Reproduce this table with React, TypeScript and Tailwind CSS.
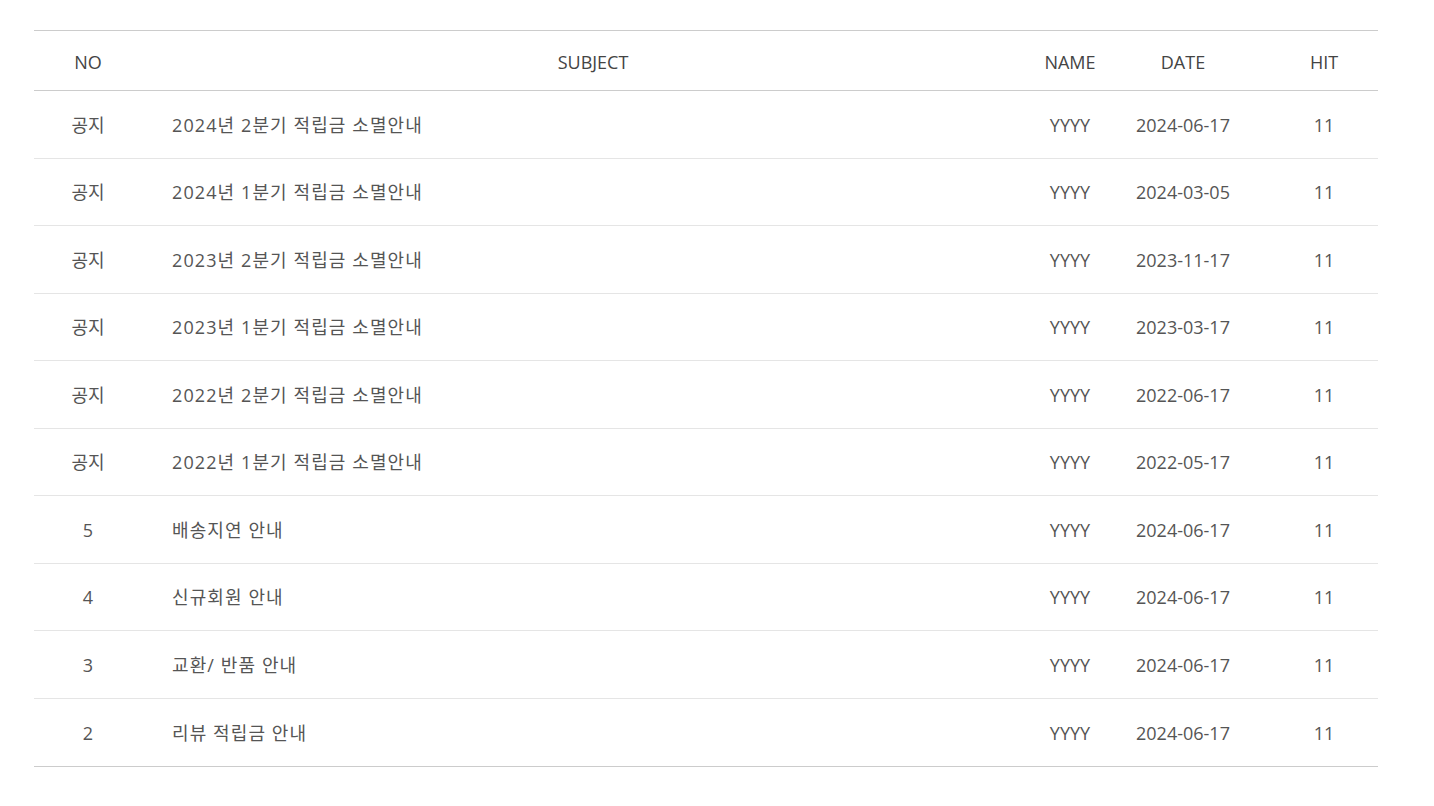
const rows = [
  { no: "공지", subject: "2024년 2분기 적립금 소멸안내", date: "2024-06-17" },
  { no: "공지", subject: "2024년 1분기 적립금 소멸안내", date: "2024-03-05" },
  { no: "공지", subject: "2023년 2분기 적립금 소멸안내", date: "2023-11-17" },
  { no: "공지", subject: "2023년 1분기 적립금 소멸안내", date: "2023-03-17" },
  { no: "공지", subject: "2022년 2분기 적립금 소멸안내", date: "2022-06-17" },
  { no: "공지", subject: "2022년 1분기 적립금 소멸안내", date: "2022-05-17" },
  { no: "5", subject: "배송지연 안내", date: "2024-06-17" },
  { no: "4", subject: "신규회원 안내", date: "2024-06-17" },
  { no: "3", subject: "교환/ 반품 안내", date: "2024-06-17" },
  { no: "2", subject: "리뷰 적립금 안내", date: "2024-06-17" },
];

const cols = "grid grid-cols-[108px_902px_52px_174px_108px] items-center";

export default function App() {
  return (
    <div
      className="min-h-screen bg-white pt-[30px] pl-[34px] text-[18px] text-[#555]"
      style={{ fontFamily: '"Open Sans", "Noto Sans CJK KR", sans-serif' }}
    >
      <div className="w-[1344px] border-b border-[#ccc]">
        {/* header */}
        <div className={`${cols} h-[61px] border-y border-[#ccc] pt-[3px] text-[#444]`}>
          <div className="text-center">NO</div>
          <div className="text-center">SUBJECT</div>
          <div className="text-center">NAME</div>
          <div className="text-center">DATE</div>
          <div className="text-center">HIT</div>
        </div>

        {/* rows */}
        {rows.map((r, i) => (
          <div
            key={i}
            className={`${cols} h-[67.5px] pt-[2px] ${i < rows.length - 1 ? "border-b border-[#e5e5e5]" : ""}`}
          >
            <div className="text-center">{r.no}</div>
            <div className="pl-[30px] tracking-[1.1px]">{r.subject}</div>
            <div className="text-center">YYYY</div>
            <div className="text-center">{r.date}</div>
            <div className="text-center">11</div>
          </div>
        ))}
      </div>
    </div>
  );
}
